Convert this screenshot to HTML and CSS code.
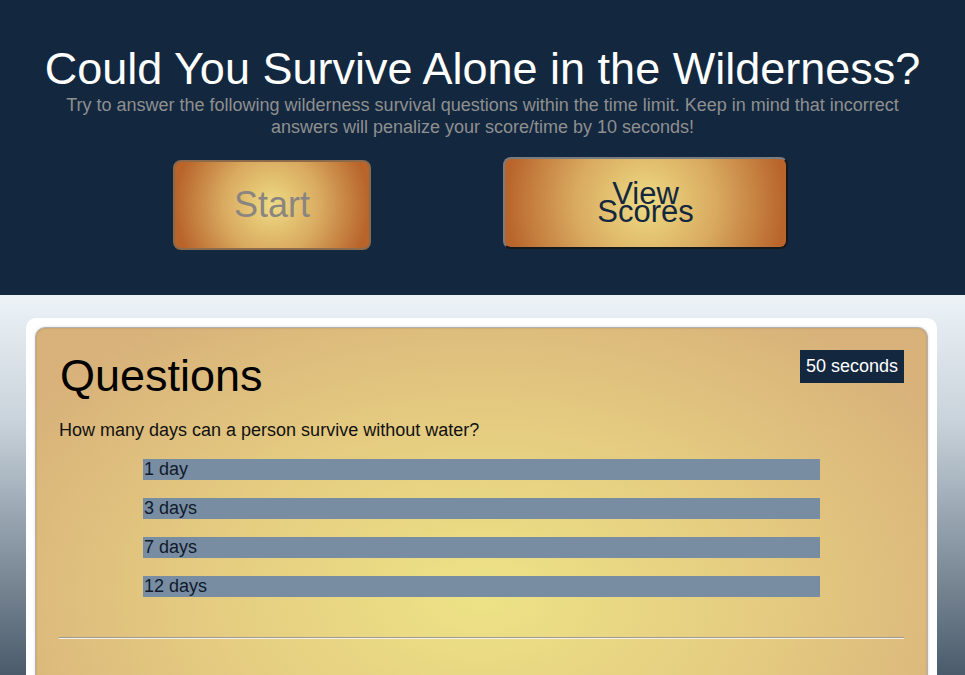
FILE: index.html
```html
<!DOCTYPE html>
<html lang="en">
<head>
<meta charset="utf-8">
<title>Wilderness Survival Quiz</title>
<link rel="stylesheet" href="styles.css">
</head>
<body>
<header class="hero">
  <h1 class="hero-title">Could You Survive Alone in the Wilderness?</h1>
  <p class="hero-sub">Try to answer the following wilderness survival questions within the time limit. Keep in mind that incorrect answers will penalize your score/time by 10 seconds!</p>
  <div class="hero-actions">
    <button class="btn btn-start">Start</button>
    <button class="btn btn-scores">View<br>Scores</button>
  </div>
</header>
<main class="shell">
  <section class="card">
    <div class="card-head">
      <h2 class="card-title">Questions</h2>
      <div class="timer">50 seconds</div>
    </div>
    <p class="question">How many days can a person survive without water?</p>
    <ul class="answers">
      <li class="answer">1 day</li>
      <li class="answer">3 days</li>
      <li class="answer">7 days</li>
      <li class="answer">12 days</li>
    </ul>
    <hr class="divider">
    <div class="spacer"></div>
  </section>
</main>
</body>
</html>
```
FILE: styles.css
```css
html, body {
  margin: 0;
  padding: 0;
}
body {
  font-family: "Liberation Sans", Arial, sans-serif;
  background: linear-gradient(180deg, #13283f 0, #13283f 295px, #edf3f7 295px, #c9d3db 420px, #8d9aa7 540px, #4b5b6b 675px);
  min-height: 675px;
  overflow: hidden;
}
.hero {
  background: #13283f;
  height: 295px;
  box-sizing: border-box;
  padding-top: 43px;
  text-align: center;
}
.hero-title {
  margin: 0;
  font-size: 45px;
  font-weight: normal;
  color: #ffffff;
  line-height: 51px;
}
.hero-sub {
  margin: 0 auto;
  width: 860px;
  font-size: 18px;
  line-height: 22px;
  color: #8f8f8f;
}
.hero-actions {
  display: flex;
  justify-content: flex-start;
  align-items: flex-start;
  padding-left: 173px;
  gap: 132px;
  margin-top: 19px;
}
.btn {
  font-family: "Liberation Sans", Arial, sans-serif;
  background: radial-gradient(circle farthest-side at center, #eedb84 0%, #d9aa60 50%, #b8642a 100%);
  cursor: pointer;
  padding: 0;
}
.btn-start {
  width: 198px;
  height: 90px;
  margin-top: 3px;
  border: 2px solid #8a6a4a;
  border-radius: 8px;
  font-size: 36px;
  color: #8a8580;
}
.btn-scores {
  width: 285px;
  height: 92px;
  border: 2px solid;
  border-color: #7a7d80 #15191e #15191e #7a7d80;
  border-radius: 8px;
  font-size: 31px;
  line-height: 18px;
  color: #13283f;
}
.shell {
  margin: 23px 28px 0 26px;
  background: #ffffff;
  border-radius: 10px;
  padding: 9px;
}
.card {
  border: 1px solid #b4b2ae;
  border-radius: 10px;
  box-shadow: inset 0 0 2px rgba(0,0,0,0.2), 0 0 3px rgba(0,0,0,0.15);
  background: radial-gradient(ellipse 60% 90% at 50% 72%, #ede386 0%, #e4ca80 55%, #d8b27a 100%);
  padding: 22px 23px 0 23px;
}
.card-head {
  display: flex;
  justify-content: space-between;
  align-items: flex-start;
}
.card-title {
  margin: 0 0 0 1px;
  font-size: 45px;
  font-weight: normal;
  line-height: 52px;
  color: #000;
}
.timer {
  margin-top: 0;
  margin-right: 0;
  background: #13283f;
  color: #ffffff;
  font-size: 18px;
  line-height: 21px;
  padding: 6px 6px;
}
.question {
  margin: 18px 0 0 0;
  font-size: 18px;
  line-height: 21px;
  color: #111;
}
.answers {
  list-style: none;
  margin: 18px auto 0;
  padding: 0;
  width: 677px;
  display: flex;
  flex-direction: column;
  gap: 18px;
}
.answer {
  background: #798da2;
  color: #0f1a2a;
  font-size: 18px;
  line-height: 21px;
  padding-left: 1px;
}
.divider {
  margin: 40px 0 0 0;
  border: 0;
  border-top: 1px solid #9c9a92;
  border-bottom: 1px solid #f4f2ea;
  height: 0;
}
.spacer {
  height: 60px;
}
```
